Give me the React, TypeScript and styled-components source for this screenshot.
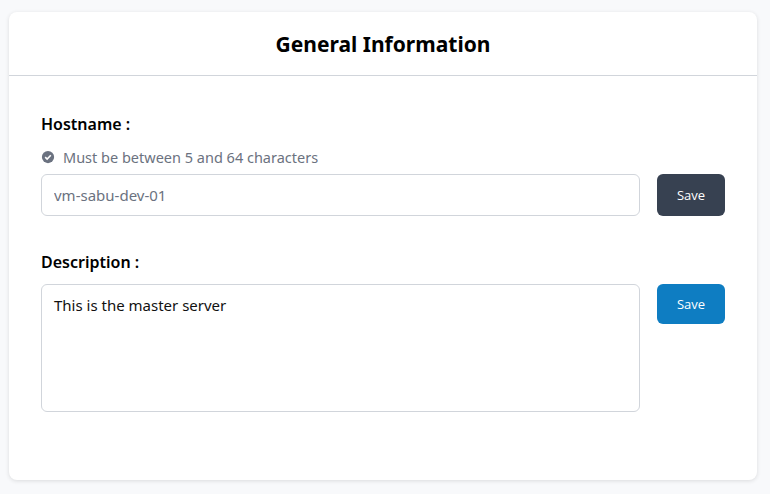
import React from "react";
import styled, { createGlobalStyle } from "styled-components";

const Global = createGlobalStyle`
  body { margin: 0; background: #f8f9fb; font-family: "Noto Sans", "Open Sans", sans-serif; }
  * { box-sizing: border-box; }
`;

const Page = styled.div`
  padding: 12px 13px 14px 9px;
`;

const Card = styled.div`
  background: #fff;
  border-radius: 8px;
  box-shadow: 0 1px 4px rgba(0, 0, 0, 0.12);
  height: 468px;
`;

const Header = styled.div`
  height: 64px;
  border-bottom: 1px solid #d1d5db;
  display: flex;
  align-items: center;
  justify-content: center;
  h2 {
    margin: 0;
    font-size: 21px;
    font-weight: 700;
    color: #000;
  }
`;

const Body = styled.div`
  padding: 36px 32px 0 32px;
`;

const Field = styled.div`
  margin-bottom: 34px;
`;

const Label = styled.div`
  font-size: 16px;
  font-weight: 600;
  color: #000;
  margin-bottom: 10px;
  line-height: 24px;
`;

const Hint = styled.div`
  display: flex;
  align-items: center;
  gap: 8px;
  font-size: 14.5px;
  color: #6b7280;
  margin-bottom: 6px;
  line-height: 22px;
`;

const Row = styled.div`
  display: flex;
  align-items: flex-start;
  gap: 17px;
`;

const Input = styled.input`
  flex: 1;
  height: 42px;
  border: 1px solid #d1d5db;
  border-radius: 6px;
  padding: 0 12px;
  font: inherit;
  font-size: 15px;
  color: #6b7280;
  outline: none;
`;

const Area = styled.textarea`
  flex: 1;
  height: 128px;
  border: 1px solid #d1d5db;
  border-radius: 6px;
  padding: 10px 12px;
  font: inherit;
  font-size: 15px;
  color: #111;
  resize: none;
  outline: none;
`;

const Button = styled.button<{ bg: string; h: number }>`
  width: 68px;
  height: ${(p) => p.h}px;
  background: ${(p) => p.bg};
  color: #fff;
  border: none;
  border-radius: 6px;
  font-family: "Open Sans", sans-serif;
  font-size: 13px;
`;

const App = () => (
  <Page>
    <Global />
    <Card>
      <Header>
        <h2>General Information</h2>
      </Header>
      <Body>
        <Field>
          <Label>Hostname :</Label>
          <Hint>
            <svg width="14" height="14" viewBox="0 0 16 16">
              <circle cx="8" cy="8" r="7" fill="#6b7280" />
              <path d="M4.8 8.2l2.2 2.2 4.2-4.4" stroke="#fff" strokeWidth="1.8" fill="none" />
            </svg>
            Must be between 5 and 64 characters
          </Hint>
          <Row>
            <Input defaultValue="vm-sabu-dev-01" />
            <Button bg="#374151" h={42}>Save</Button>
          </Row>
        </Field>
        <Field>
          <Label>Description :</Label>
          <Row>
            <Area defaultValue="This is the master server" />
            <Button bg="#0e7dc2" h={40}>Save</Button>
          </Row>
        </Field>
      </Body>
    </Card>
  </Page>
);

export default App;
